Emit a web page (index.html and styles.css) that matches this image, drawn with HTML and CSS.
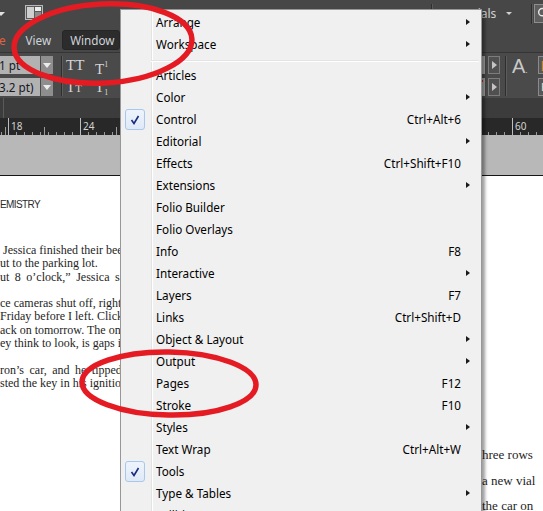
FILE: index.html
```html
<!DOCTYPE html>
<html>
<head>
<meta charset="utf-8">
<link rel="stylesheet" href="styles.css">
</head>
<body>
<div class="app">
  <header class="topbar">
    <span class="tri-down"></span>
    <svg class="layout-ico" width="18" height="15" viewBox="0 0 18 15">
      <rect x="0.5" y="0.5" width="17" height="14" fill="#5a5a5a" stroke="#b8b8b8"/>
      <rect x="2" y="2" width="7" height="11" fill="#cfcfcf"/>
      <rect x="10" y="2" width="6" height="4" fill="#ececec"/>
      <rect x="10" y="7" width="6" height="6" fill="#8c8c8c"/>
    </svg>
    <div class="ws">
      <span class="vsep"></span>
      <span class="ws-name">Essentials</span>
      <span class="ws-caret"></span>
      <span class="vsep vsep-r"></span>
      <span class="search">
        <svg width="24" height="17" viewBox="0 0 24 17"><circle cx="8" cy="7" r="4" fill="none" stroke="#e6e6e6" stroke-width="1.5"/><path d="M11 10 L15 14" stroke="#e6e6e6" stroke-width="2"/></svg>
      </span>
    </div>
  </header>

  <nav class="menubar">
    <span class="mb-item mb-type">e</span>
    <span class="mb-item mb-view">View</span>
    <span class="mb-item mb-active">Window</span>
  </nav>

  <section class="control">
    <div class="cp-left">
      <div class="cp-fields">
        <div class="field"><span class="field-val">1 pt</span><span class="dd"></span></div>
        <div class="field"><span class="field-val">3.2 pt)</span><span class="dd"></span></div>
      </div>
      <span class="cp-sep"></span>
      <div class="cp-grid">
        <span class="tt">TT</span>
        <span class="tt">T<sup class="sup">1</sup></span>
        <span class="tt">T<span class="sc">T</span></span>
        <span class="tt">T<sub class="sub">1</sub></span>
      </div>
    </div>
    <div class="cp-right">
      <div class="fr-col">
        <span class="fr"></span>
        <span class="fr"><i class="redmark"></i></span>
      </div>
      <div class="btn-col">
        <span class="pbtn"></span>
        <span class="pbtn"></span>
      </div>
      <span class="cp-sep cp-sep-r"></span>
      <span class="bigA">A<span class="dot">.</span></span>
      <div class="box-col">
        <span class="ibox"><b class="orange">[</b><b class="blue">I</b></span>
        <span class="ibox">E</span>
      </div>
    </div>
  </section>

  <div class="tabband"><span class="doctab"></span></div>

  <div class="ruler">
    <span class="rcell">18</span>
    <span class="rcell">24</span>
    <span class="rcell">30</span>
    <span class="rcell">36</span>
    <span class="rcell">42</span>
    <span class="rcell">48</span>
    <span class="rcell">54</span>
    <span class="rcell">60</span>
  </div>

  <div class="pasteboard"></div>

  <main class="page">
    <div class="col-left">
      <div class="chapter">EMISTRY</div>
      <div class="body-text">
        <div class="ln ind">Jessica finished their beer</div>
        <div class="ln">ut to the parking lot.</div>
        <div class="ln wide">ut 8 o’clock,” Jessica said</div>
        <div class="ln blank">&nbsp;</div>
        <div class="ln">ce cameras shut off, right?</div>
        <div class="ln">Friday before I left. Click o</div>
        <div class="ln">ack on tomorrow. The onl</div>
        <div class="ln">ey think to look, is gaps i</div>
        <div class="ln blank">&nbsp;</div>
        <div class="ln wide">ron’s car, and he tipped h</div>
        <div class="ln">sted the key in his ignition</div>
      </div>
    </div>
    <div class="col-right">
      <div class="rln">hree rows</div>
      <div class="rln">a new vial</div>
      <div class="rln">the car on</div>
    </div>
  </main>
</div>

<div class="menu">
  <div class="mi"><span class="ck"></span><span class="lbl">Arrange</span><span class="arr"><i></i></span></div>
  <div class="mi"><span class="ck"></span><span class="lbl">Workspace</span><span class="arr"><i></i></span></div>
  <div class="msep"></div>
  <div class="mi"><span class="ck"></span><span class="lbl">Articles</span><span class="arr"></span></div>
  <div class="mi"><span class="ck"></span><span class="lbl">Color</span><span class="arr"><i></i></span></div>
  <div class="mi"><span class="ck on"><svg width="20" height="21" viewBox="0 0 20 21"><path d="M6.5 11 L9 14.5 L13.5 7" fill="none" stroke="#1a2a80" stroke-width="1.6"/></svg></span><span class="lbl">Control</span><span class="key">Ctrl+Alt+6</span><span class="arr"></span></div>
  <div class="mi"><span class="ck"></span><span class="lbl">Editorial</span><span class="arr"><i></i></span></div>
  <div class="mi"><span class="ck"></span><span class="lbl">Effects</span><span class="key">Ctrl+Shift+F10</span><span class="arr"></span></div>
  <div class="mi"><span class="ck"></span><span class="lbl">Extensions</span><span class="arr"><i></i></span></div>
  <div class="mi"><span class="ck"></span><span class="lbl">Folio Builder</span><span class="arr"></span></div>
  <div class="mi"><span class="ck"></span><span class="lbl">Folio Overlays</span><span class="arr"></span></div>
  <div class="mi"><span class="ck"></span><span class="lbl">Info</span><span class="key">F8</span><span class="arr"></span></div>
  <div class="mi"><span class="ck"></span><span class="lbl">Interactive</span><span class="arr"><i></i></span></div>
  <div class="mi"><span class="ck"></span><span class="lbl">Layers</span><span class="key">F7</span><span class="arr"></span></div>
  <div class="mi"><span class="ck"></span><span class="lbl">Links</span><span class="key">Ctrl+Shift+D</span><span class="arr"></span></div>
  <div class="mi"><span class="ck"></span><span class="lbl">Object &amp; Layout</span><span class="arr"><i></i></span></div>
  <div class="mi"><span class="ck"></span><span class="lbl">Output</span><span class="arr"><i></i></span></div>
  <div class="mi"><span class="ck"></span><span class="lbl">Pages</span><span class="key">F12</span><span class="arr"></span></div>
  <div class="mi"><span class="ck"></span><span class="lbl">Stroke</span><span class="key">F10</span><span class="arr"></span></div>
  <div class="mi"><span class="ck"></span><span class="lbl">Styles</span><span class="arr"><i></i></span></div>
  <div class="mi"><span class="ck"></span><span class="lbl">Text Wrap</span><span class="key">Ctrl+Alt+W</span><span class="arr"></span></div>
  <div class="mi"><span class="ck on"><svg width="20" height="21" viewBox="0 0 20 21"><path d="M6.5 11 L9 14.5 L13.5 7" fill="none" stroke="#1a2a80" stroke-width="1.6"/></svg></span><span class="lbl">Tools</span><span class="arr"></span></div>
  <div class="mi"><span class="ck"></span><span class="lbl">Type &amp; Tables</span><span class="arr"><i></i></span></div>
  <div class="mi"><span class="ck"></span><span class="lbl">Utilities</span><span class="arr"><i></i></span></div>
</div>

<svg class="annot" width="543" height="511" viewBox="0 0 543 511">
  <ellipse cx="103" cy="43.5" rx="89" ry="39.5" transform="rotate(-3 103 43.5)" fill="none" stroke="#e41b23" stroke-width="5.5"/>
  <ellipse cx="169" cy="383.5" rx="87" ry="31.5" transform="rotate(1 169 383.5)" fill="none" stroke="#e41b23" stroke-width="5.5"/>
</svg>
</body>
</html>
```

FILE: styles.css
```css
html, body {
  margin: 0;
  padding: 0;
  width: 543px;
  height: 511px;
  overflow: hidden;
  background: #474747;
}

.app {
  width: 543px;
  height: 511px;
  display: flex;
  flex-direction: column;
  font-family: "Noto Sans", "DejaVu Sans", sans-serif;
}

/* ---------- top application bar ---------- */
.topbar {
  height: 27px;
  flex: none;
  display: flex;
  align-items: center;
  background: #474747;
}
.tri-down {
  width: 0;
  height: 0;
  margin-left: -3px;
  border-left: 4px solid transparent;
  border-right: 4px solid transparent;
  border-top: 4px solid #e0e0e0;
}
.layout-ico {
  margin-left: 20px;
  align-self: flex-start;
  margin-top: 5px;
  flex: none;
}
.ws {
  margin-left: auto;
  margin-right: -15px;
  display: flex;
  align-items: center;
}
.vsep {
  width: 1px;
  height: 20px;
  background: #2e2e2e;
  border-right: 1px solid #5a5a5a;
}
.ws-name {
  width: 55px;
  margin-left: 8px;
  color: #d2d2d2;
  font-size: 12px;
  white-space: nowrap;
}
.ws-caret {
  margin-left: 10px;
  width: 0;
  height: 0;
  border-left: 3px solid transparent;
  border-right: 3px solid transparent;
  border-top: 3px solid #d0d0d0;
}
.vsep-r {
  margin-left: 19px;
}
.search {
  margin-left: 1px;
  width: 22px;
  height: 17px;
  border: 1px solid #8e8e8e;
  background: #5e5e5e;
  display: flex;
}

/* ---------- menu bar ---------- */
.menubar {
  height: 25px;
  flex: none;
  display: flex;
  align-items: center;
  background: #474747;
  font-size: 11.7px;
  color: #cfd4da;
}
.mb-type {
  margin-left: -1px;
  color: #e2603f;
}
.mb-view {
  margin-left: 20px;
}
.mb-active {
  margin-left: 11px;
  height: 20px;
  line-height: 19px;
  padding: 0 7px;
  box-sizing: border-box;
  width: 58px;
  background: #2c2c2c;
  border: 1px solid #262626;
  border-radius: 3px;
}

/* ---------- control panel ---------- */
.control {
  height: 46px;
  flex: none;
  box-sizing: border-box;
  border-top: 1px solid #353535;
  padding-top: 3px;
  display: flex;
  align-items: flex-start;
  background: #4a4a4a;
}
.cp-left {
  display: flex;
  align-items: center;
}
.cp-fields {
  display: flex;
  flex-direction: column;
  gap: 4px;
}
.field {
  display: flex;
  height: 18px;
}
.field-val {
  width: 40px;
  background: #b2b2b2;
  color: #16181f;
  font-size: 11.7px;
  line-height: 18px;
  white-space: nowrap;
  overflow: hidden;
  text-indent: -1px;
}
.dd {
  width: 12px;
  margin-left: 1px;
  background: #8e8e8e;
  display: flex;
  align-items: center;
  justify-content: center;
}
.dd::after {
  content: "";
  border-left: 4px solid transparent;
  border-right: 4px solid transparent;
  border-top: 5px solid #ececec;
}
.cp-sep {
  width: 1px;
  height: 40px;
  margin-left: 8px;
  background: #2f2f2f;
  border-right: 1px solid #5c5c5c;
}
.cp-grid {
  margin-left: 3px;
  display: grid;
  grid-template-columns: 29px 22px;
  grid-auto-rows: 18px;
  row-gap: 4px;
}
.tt {
  font-family: "Liberation Serif", "Times New Roman", serif;
  font-size: 15px;
  line-height: 18px;
  color: #d6d6d6;
  white-space: nowrap;
}
.sup {
  font-size: 8px;
  vertical-align: 7px;
}
.sub {
  font-size: 8px;
  vertical-align: -3px;
}
.sc {
  font-size: 11px;
}

.cp-right {
  margin-left: auto;
  margin-right: -17px;
  display: flex;
  align-items: flex-start;
}
.fr-col, .btn-col, .box-col {
  display: flex;
  flex-direction: column;
  gap: 4px;
}
.fr {
  width: 40px;
  height: 18px;
  background: #a9a9a9;
  position: relative;
}
.redmark {
  position: absolute;
  right: 2px;
  top: 2px;
  width: 2px;
  height: 2px;
  background: #d02020;
}
.btn-col {
  margin-left: 3px;
}
.pbtn {
  width: 12px;
  height: 18px;
  box-sizing: border-box;
  border: 1px solid #7c7c7c;
  background: #505050;
  display: flex;
  align-items: center;
  justify-content: center;
}
.pbtn::after {
  content: "";
  border-top: 4px solid transparent;
  border-bottom: 4px solid transparent;
  border-left: 5px solid #c4c4c4;
}
.cp-sep-r {
  margin-left: 5px;
}
.bigA {
  margin-left: 5px;
  width: 20px;
  font-family: "Liberation Sans", Arial, sans-serif;
  font-size: 20px;
  line-height: 20px;
  color: #c9c9c9;
  white-space: nowrap;
}
.dot {
  font-size: 9px;
}
.box-col {
  margin-left: 6px;
}
.ibox {
  width: 22px;
  height: 18px;
  box-sizing: border-box;
  border: 1px solid #8a8a8a;
  background: #575757;
  color: #e0e0e0;
  font-size: 11px;
  line-height: 16px;
  padding-left: 2px;
}
.orange { color: #e0902a; font-weight: normal; }
.blue { color: #5a8ad0; font-weight: normal; }

/* ---------- tab band, ruler, pasteboard ---------- */
.tabband {
  height: 20px;
  flex: none;
  display: flex;
  background: #3c3c3c;
}
.doctab {
  margin-left: 3px;
  border-left: 1px solid #5a5a5a;
}
.ruler {
  height: 17px;
  flex: none;
  display: flex;
  padding-left: 8px;
  box-sizing: border-box;
  background-color: #282828;
  background-image:
    repeating-linear-gradient(to right, #9a9a9a 0 1px, transparent 1px 8px),
    repeating-linear-gradient(to right, transparent 0 36px, #9a9a9a 36px 37px, transparent 37px 72px);
  background-size: 100% 3px, 100% 8px;
  background-position: 8px bottom, 8px bottom;
  background-repeat: repeat-x;
}
.rcell {
  flex: none;
  width: 72px;
  box-sizing: border-box;
  border-left: 1px solid #bdbdbd;
  padding-left: 2px;
  padding-top: 2px;
  font-size: 10px;
  line-height: 12px;
  color: #d2d2d2;
}
.pasteboard {
  height: 40px;
  flex: none;
  background: #b8b8b8;
}

/* ---------- page ---------- */
.page {
  flex: 1;
  display: flex;
  background: #ffffff;
  border-top: 1px solid #151515;
  overflow: hidden;
}
.col-left {
  width: 121px;
  flex: none;
  overflow: hidden;
  white-space: nowrap;
  padding-top: 22px;
}
.chapter {
  font-family: "Liberation Sans", Arial, sans-serif;
  font-size: 10px;
  letter-spacing: -0.6px;
  line-height: 14px;
  color: #2a2a2a;
}
.body-text {
  margin-top: 32px;
  font-family: "Liberation Serif", "Times New Roman", serif;
  font-size: 12px;
  line-height: 13.3px;
  color: #1e1e1e;
}
.ind {
  padding-left: 3px;
}
.wide {
  word-spacing: 2.5px;
}
.col-right {
  margin-left: auto;
  width: 61px;
  flex: none;
  padding-top: 266px;
  white-space: nowrap;
  font-family: "Liberation Serif", "Times New Roman", serif;
  font-size: 13px;
  line-height: 25.5px;
  color: #1e1e1e;
}

/* ---------- dropdown menu (overlay) ---------- */
.menu {
  position: absolute;
  left: 120px;
  top: 9px;
  width: 360px;
  height: 520px;
  padding-top: 1px;
  border: 1px solid #979797;
  background-color: #f0f0f0;
  background-image: linear-gradient(to right, transparent 30px, #e2e3e3 30px, #e2e3e3 31px, #ffffff 31px, #ffffff 32px, transparent 32px);
  box-shadow: 3px 3px 3px rgba(0, 0, 0, 0.38);
  font-family: "Noto Sans", "Segoe UI", sans-serif;
  font-size: 11.7px;
  color: #000;
}
.mi {
  height: 22px;
  display: flex;
  align-items: center;
}
.ck {
  flex: none;
  width: 20px;
  height: 21px;
  margin-left: 4px;
  margin-right: 11px;
  box-sizing: border-box;
}
.ck.on {
  border: 1px solid #a9c7ec;
  border-radius: 3px;
  background: linear-gradient(#eef4fc, #dfe9f7);
}
.ck.on svg {
  display: block;
  margin: -1px 0 0 -1px;
}
.lbl {
  flex: 1;
  white-space: nowrap;
}
.key {
  white-space: nowrap;
}
.arr {
  flex: none;
  width: 20px;
  display: flex;
  align-items: center;
}
.arr i {
  margin-left: 5px;
  width: 0;
  height: 0;
  border-top: 3.5px solid transparent;
  border-bottom: 3.5px solid transparent;
  border-left: 4px solid #1a1a1a;
}
.msep {
  height: 9px;
  margin: 0 2px 0 30px;
  background: linear-gradient(to bottom, transparent 5px, #e2e3e3 5px, #e2e3e3 6px, #ffffff 6px, #ffffff 7px, transparent 7px);
}

/* ---------- red annotation ellipses (overlay) ---------- */
.annot {
  position: absolute;
  left: 0;
  top: 0;
  pointer-events: none;
}
```
